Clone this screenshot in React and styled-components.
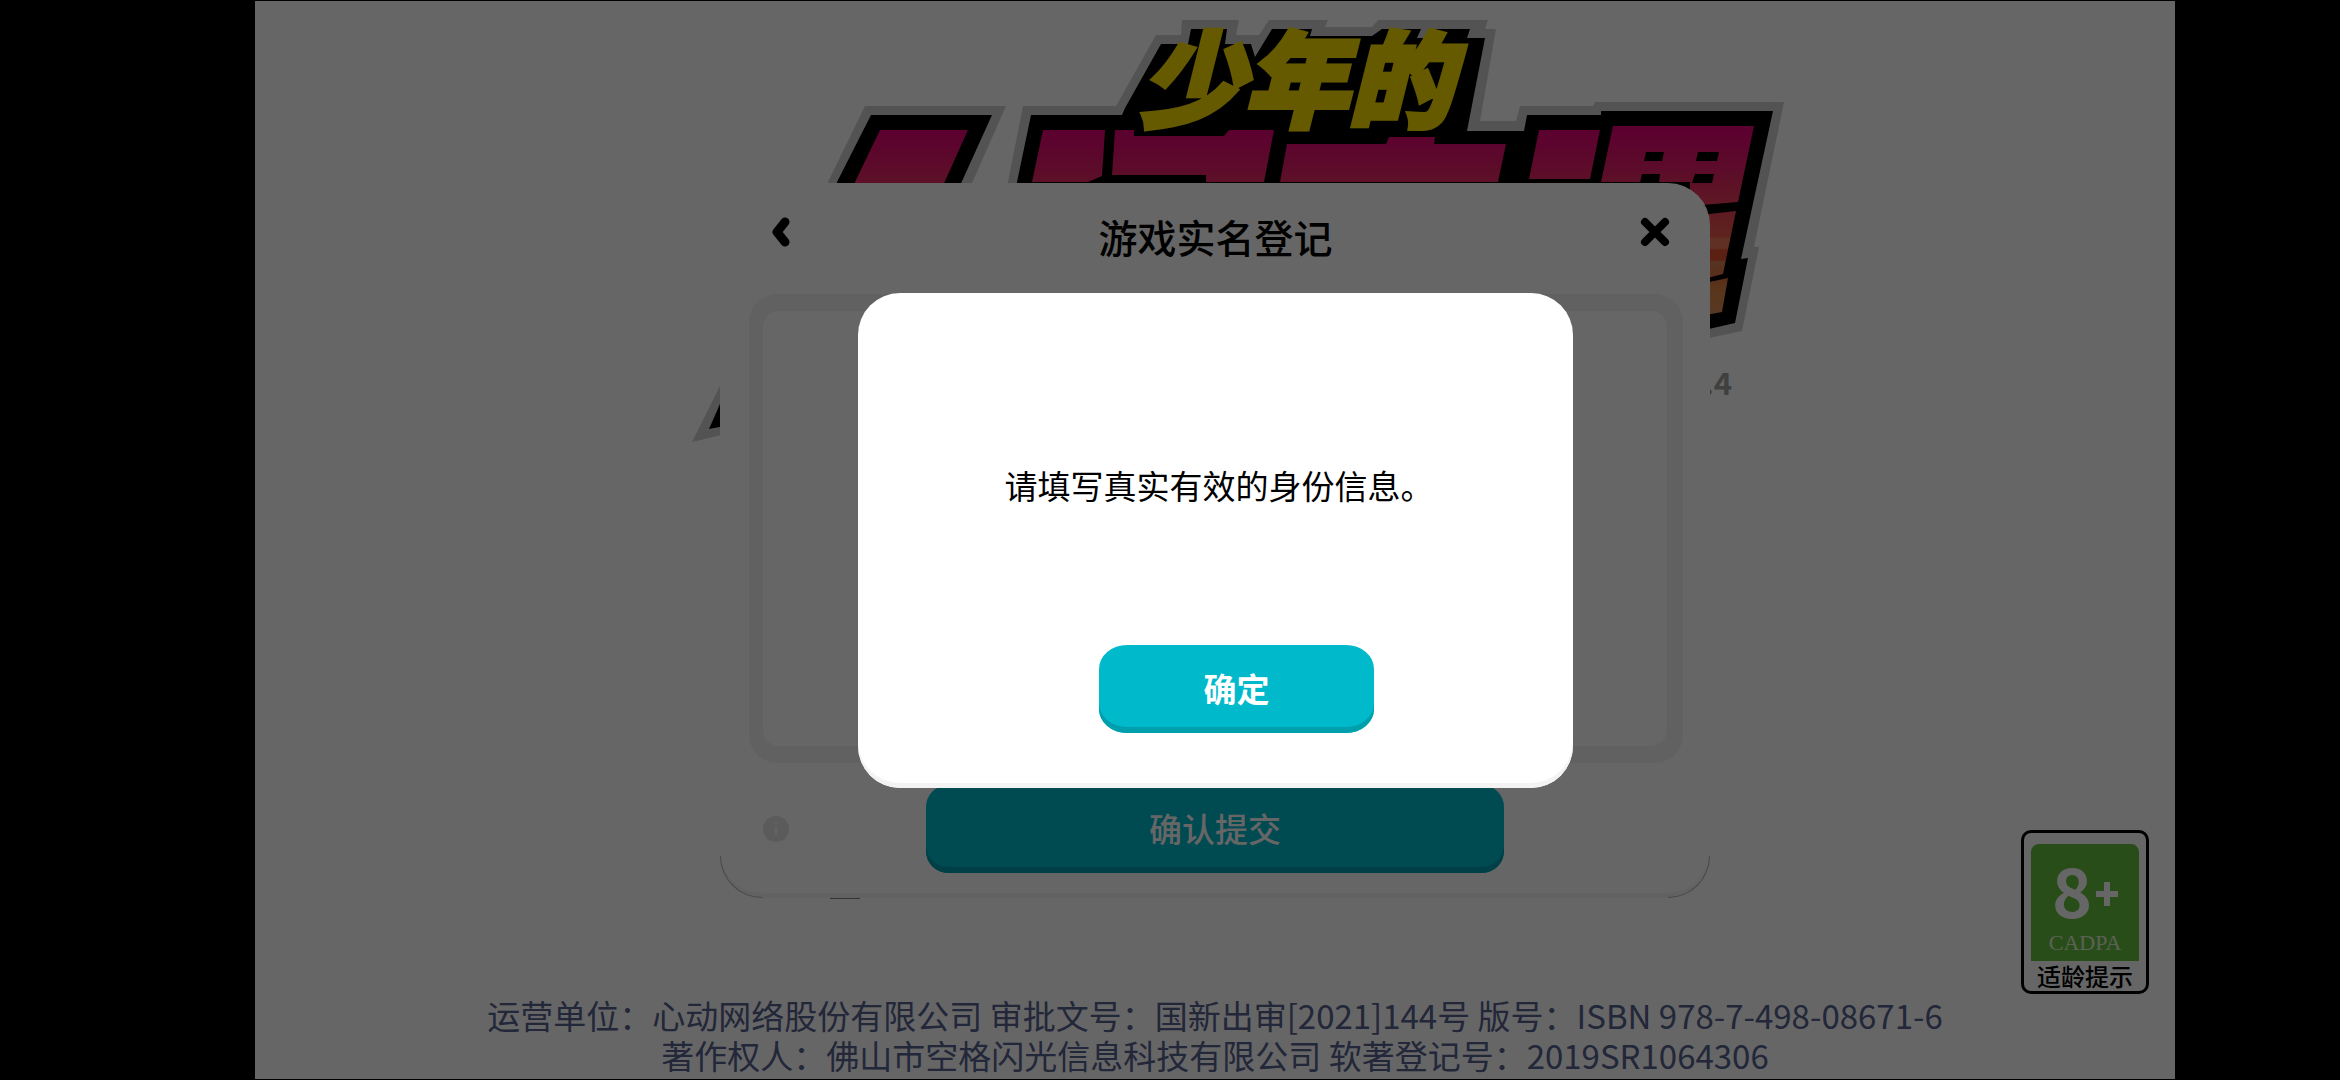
import React, { useState } from 'react'
import styled, { createGlobalStyle } from 'styled-components'

const GlobalStyle = createGlobalStyle`
  * {
    box-sizing: border-box;
  }
  body {
    margin: 0;
    background: #000000;
    font-family: "Noto Sans CJK SC", "Noto Sans", sans-serif;
  }
  button {
    font-family: inherit;
    border: none;
    padding: 0;
    cursor: pointer;
  }
  p, h1 {
    margin: 0;
  }
`

const Stage = styled.main`
  position: relative;
  display: flex;
  flex-direction: column;
  justify-content: flex-end;
  min-height: calc(100vh - 2px);
  margin: 1px 165px 1px 255px;
  background: #ffffff;
  overflow: hidden;
`

const Logo = styled.svg`
  position: absolute;
  inset: 0;
  width: 100%;
  height: 100%;
`

const AgeBadge = styled.div`
  align-self: flex-end;
  width: 128px;
  margin: 0 26px 1px 0;
  padding: 11px 7px 0;
  border: 3px solid #000000;
  border-radius: 10px;
`

const AgeBox = styled.div`
  height: 117px;
  padding-top: 11px;
  border-radius: 8px 8px 0 0;
  background: #66c03c;
  color: #ffffff;
  text-align: center;
`

const AgeNumber = styled.div`
  display: flex;
  justify-content: center;
  align-items: center;
  gap: 4px;
  height: 68px;
  font-size: 68px;
  font-weight: 700;
  line-height: 68px;
`

const Plus = styled.svg`
  width: 22px;
  height: 24px;
  margin-top: 10px;
`

const Cadpa = styled.div`
  font-family: "Liberation Serif", serif;
  font-size: 22px;
  line-height: 40px;
  color: #e0f2d8;
`

const AgeLabel = styled.div`
  font-size: 24px;
  font-weight: 500;
  line-height: 30px;
  white-space: nowrap;
  text-align: center;
`

const Legal = styled.footer`
  padding-bottom: 4px;
  font-size: 33px;
  line-height: 40px;
  color: #566190;
  text-align: center;
`

const Layer = styled.div`
  position: absolute;
  inset: 0;
  display: flex;
  align-items: center;
  justify-content: center;
  background: ${props => props.$dim ? 'rgba(0, 0, 0, 0.6)' : 'transparent'};
`

const Panel = styled.section`
  position: relative;
  width: 90%;
  max-width: 990px;
  border-radius: 42px;
  background: #ffffff;
  box-shadow: inset 0 -5px 1px #f6f6f6;
`

const Corner = styled.span`
  position: absolute;
  bottom: 0;
  ${props => props.$side}: 0;
  width: 42px;
  height: 42px;
  border: 0 solid #b4b4b4;
  border-bottom-width: 1px;
  border-${props => props.$side}-width: 1px;
  border-bottom-${props => props.$side}-radius: 42px;
`

const PanelHeader = styled.header`
  display: flex;
  align-items: center;
  justify-content: space-between;
  height: 111px;
  padding: 0 40px 0 51px;
`

const PanelTitle = styled.h1`
  padding-bottom: 5px;
  font-size: 39px;
  font-weight: 500;
  line-height: 56px;
`

const IconButton = styled.button`
  display: flex;
  padding-bottom: 12px;
  background: transparent;
  svg {
    width: ${props => props.$width}px;
    height: 30px;
    fill: none;
    stroke: #000000;
    stroke-width: 8;
    stroke-linecap: round;
    stroke-linejoin: round;
  }
`

const Tray = styled.div`
  height: 469px;
  margin: 0 27px 0 29px;
  border: solid #f2f2f2;
  border-width: 17px 16px 17px 14px;
  border-radius: 28px;
  background: #f2f2f2;
`

const TrayInner = styled.div`
  height: 100%;
  border-radius: 16px;
  background: #ffffff;
`

const PanelFooter = styled.footer`
  display: grid;
  grid-template-columns: 1fr minmax(auto, 578px) 1fr;
  align-items: center;
  height: 135px;
  padding: 0 42px 2px;
`

const InfoButton = styled.button`
  width: 28px;
  height: 28px;
  background: transparent;
  svg {
    display: block;
  }
`

const PrimaryButton = styled.button`
  width: ${props => props.$wide ? '100%' : '275px'};
  height: 88px;
  padding-bottom: 2px;
  border-radius: ${props => props.$wide ? '22px' : '28px / 24px'};
  background: #00bacb;
  box-shadow: inset 0 -6px 0 #009fad;
  color: #ffffff;
  font-size: 33px;
  font-weight: ${props => props.$wide ? 500 : 700};
`

const Alert = styled.section`
  width: 80%;
  max-width: 715px;
  padding: 32px 0 55px;
  border-radius: 42px;
  background: #ffffff;
  box-shadow: inset 0 -5px 0 #f3f3f3;
`

const AlertMessage = styled.p`
  display: flex;
  align-items: center;
  justify-content: center;
  height: 320px;
  padding-left: 8px;
  font-size: 33px;
`

const AlertActions = styled.div`
  display: flex;
  justify-content: center;
  padding-left: 43px;
`

const GameLogo = () => (
  <Logo viewBox='255 1 1920 1078' preserveAspectRatio='xMidYMin meet' aria-hidden='true'>
    <defs>
      <linearGradient id='sunset' gradientUnits='userSpaceOnUse' x1='0' y1='126' x2='0' y2='320'>
        <stop offset='0' stopColor='#e60078' />
        <stop offset='0.12' stopColor='#e60e70' />
        <stop offset='0.32' stopColor='#e83060' />
        <stop offset='0.57' stopColor='#ee5a4c' />
        <stop offset='0.58' stopColor='#ee7858' />
        <stop offset='0.63' stopColor='#ee7858' />
        <stop offset='0.64' stopColor='#e65030' />
        <stop offset='0.69' stopColor='#e65030' />
        <stop offset='0.7' stopColor='#d88050' />
        <stop offset='0.79' stopColor='#e07440' />
        <stop offset='0.85' stopColor='#dd8844' />
        <stop offset='1' stopColor='#dd9060' />
      </linearGradient>
    </defs>

    {/* pale rim */}
    <g fill='#d0d0d0'>
      <path d='M828 182L865 106H1006L969 190H828Z' />
      <path d='M1008 182L1023 106H1116L1156 35H1181L1182 20H1239L1236 35H1259L1269 20H1328L1325 27H1372L1378 20H1488L1485 29H1496L1480 121H1516L1520 106H1593L1595 102H1784L1754 247H1759L1742 331L1700 340V190H1008Z' />
      <path d='M730 366L692 442L730 433Z' />
    </g>

    {/* black plate */}
    <g fill='#000000'>
      <path d='M837 182L871 115H992L958 190H837Z' />
      <path d='M1017 182L1031 115H1122L1125 108L1161 44H1188L1191 29H1227L1225 44H1251L1255 57L1272 29H1312L1310 36H1372L1382 29H1421L1417 38H1428L1432 29H1470L1467 38H1485L1467 131H1524L1527 115H1601V111H1773L1741 259L1748 258L1735 323L1700 331V190H1017Z' />
      <path d='M730 381L709 429L730 425Z' />
    </g>

    {/* coloured blocks */}
    <g fill='url(#sunset)'>
      <path d='M855 182L880 130H968L941 190H855Z' />
      <path d='M1032 182L1043 130H1105L1102 176L1088 182Z' />
      <path d='M1115 130H1134V136H1224L1229 130H1274L1264 182H1206V175H1112Z' />
      <path d='M1280 182L1287 144H1386L1389 137H1435L1434 144H1506L1498 182Z' />
      <path d='M1529 179L1539 130H1600L1590 179Z' />
      <path d='M1601 182L1613 126H1754L1738 202L1690 206V182Z' />
      <path d='M1700 215L1736 211L1723 274L1700 280Z' />
      <path d='M1700 284L1728 278L1722 312L1700 316Z' />
    </g>
    <g fill='#000000'>
      <path d='M1646 152H1664L1662 161H1644Z' />
      <path d='M1698 152H1719L1717 161H1696Z' />
      <path d='M1642 174H1660L1659 183H1640Z' />
      <path d='M1695 174H1714L1712 183H1692Z' />
    </g>

    <text
      x='1140'
      y='119'
      fontSize='104'
      fontWeight='900'
      fontStyle='italic'
      fill='#ffe000'
      stroke='#ffe000'
      strokeWidth='5'
    >
      少年的
    </text>

    <text x='1732' y='395' textAnchor='end' fontSize='31' fontWeight='700' fill='#a0a0a0'>.4</text>
    <rect x='830' y='896' width='30' height='3' fill='#808080' />
  </Logo>
)

const App = () => {
  const [alertOpen, setAlertOpen] = useState(true)

  return (
    <>
      <GlobalStyle />
      <Stage>
        <GameLogo />

        <AgeBadge>
          <AgeBox>
            <AgeNumber>
              8
              <Plus viewBox='0 0 22 24' aria-label='+'>
                <path d='M11 0V24M0 12H22' stroke='#ffffff' strokeWidth='6' />
              </Plus>
            </AgeNumber>
            <Cadpa>CADPA</Cadpa>
          </AgeBox>
          <AgeLabel>适龄提示</AgeLabel>
        </AgeBadge>

        <Legal>
          <p>运营单位：心动网络股份有限公司 审批文号：国新出审[2021]144号 版号：ISBN 978-7-498-08671-6</p>
          <p>著作权人：佛山市空格闪光信息科技有限公司 软著登记号：2019SR1064306</p>
        </Legal>

        <Layer>
          <Panel>
            <Corner $side='left' />
            <Corner $side='right' />
            <PanelHeader>
              <IconButton $width={20} aria-label='返回'>
                <svg viewBox='0 0 20 30'>
                  <path d='M14 5L6 15L14 25' strokeWidth='9' />
                </svg>
              </IconButton>
              <PanelTitle>游戏实名登记</PanelTitle>
              <IconButton $width={30} aria-label='关闭'>
                <svg viewBox='0 0 30 30'>
                  <path d='M5 5L25 25M25 5L5 25' />
                </svg>
              </IconButton>
            </PanelHeader>
            <Tray>
              <TrayInner />
            </Tray>
            <PanelFooter>
              <InfoButton aria-label='说明'>
                <svg viewBox='0 0 28 28'>
                  <circle cx='14' cy='14' r='13' fill='#e4e4e4' />
                  <path d='M14 7V9M14 12V21' stroke='#f4f4f4' strokeWidth='3' />
                </svg>
              </InfoButton>
              <PrimaryButton $wide>确认提交</PrimaryButton>
            </PanelFooter>
          </Panel>
        </Layer>

        {alertOpen && (
          <Layer $dim>
            <Alert role='alertdialog' aria-modal='true'>
              <AlertMessage>请填写真实有效的身份信息。</AlertMessage>
              <AlertActions>
                <PrimaryButton onClick={() => setAlertOpen(false)}>确定</PrimaryButton>
              </AlertActions>
            </Alert>
          </Layer>
        )}
      </Stage>
    </>
  )
}

export default App
